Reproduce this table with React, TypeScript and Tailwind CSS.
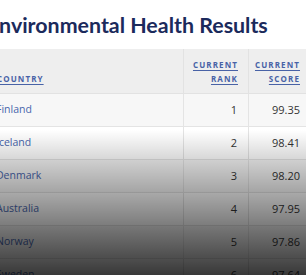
import React from "react";

const rows = [
  { c: "Finland", r: "1", s: "99.35", bg: "bg-[#f7f7f7]" },
  { c: "Iceland", r: "2", s: "98.41", bg: "bg-white" },
  { c: "Denmark", r: "3", s: "98.20", bg: "bg-[#f7f7f7]" },
  { c: "Australia", r: "4", s: "97.95", bg: "bg-white" },
  { c: "Norway", r: "5", s: "97.86", bg: "bg-[#f7f7f7]" },
  { c: "Sweden", r: "6", s: "97.64", bg: "bg-white" },
];

export default function App() {
  return (
    <div
      className="relative w-[306px] h-[275px] overflow-hidden bg-white"
      style={{ fontFamily: '"Open Sans", "Noto Sans", sans-serif' }}
    >
      <div className="ml-[-13px] w-[340px]">
        <h1
          className="pt-[10px] h-[49px] text-[21.4px] font-bold leading-[30px] text-[#1b2a5c]"
          style={{ fontFamily: 'Lato, "Open Sans", sans-serif' }}
        >
          Environmental Health Results
        </h1>
        <div className="grid grid-cols-[196px_65px_66px] text-[10px]">
          <div className="h-[45px] bg-[#eeeeee] border-b border-[#e2e2e2] flex items-end pb-[7px] pl-[10px]">
            <span className="text-[8px] font-bold tracking-[1.1px] text-[#4862a6] underline underline-offset-2 leading-[14px]">
              COUNTRY
            </span>
          </div>
          <div className="h-[45px] bg-[#eeeeee] border-b border-l border-[#e2e2e2] flex items-end justify-end pb-[7px] pr-[10px]">
            <span className="text-[8px] font-bold tracking-[1.1px] text-[#4862a6] underline underline-offset-2 leading-[14px] text-right">
              CURRENT
              <br />
              RANK
            </span>
          </div>
          <div className="h-[45px] bg-[#eeeeee] border-b border-l border-[#e2e2e2] flex items-end justify-end pb-[7px] pr-[14px]">
            <span className="text-[8px] font-bold tracking-[1.1px] text-[#4862a6] underline underline-offset-2 leading-[14px] text-right">
              CURRENT
              <br />
              SCORE
            </span>
          </div>
          {rows.map((row) => (
            <React.Fragment key={row.c}>
              <div className={`h-[33px] ${row.bg} border-b border-[#e4e4e4] flex items-center pl-[9px] text-[#4866ad] text-[10.5px] font-medium`}>
                {row.c}
              </div>
              <div className={`h-[33px] ${row.bg} border-b border-l border-[#e4e4e4] flex items-center justify-end pr-[11px] text-[#333] text-[11px]`}>
                {row.r}
              </div>
              <div className={`h-[33px] ${row.bg} border-b border-l border-[#e4e4e4] flex items-center justify-end pr-[14px] text-[#333] text-[11px]`}>
                {row.s}
              </div>
            </React.Fragment>
          ))}
        </div>
      </div>
      <div className="absolute left-0 right-0 top-[130px] bottom-0 bg-gradient-to-b from-[rgba(0,0,0,0)] to-[rgba(0,0,0,0.78)]" />
    </div>
  );
}
